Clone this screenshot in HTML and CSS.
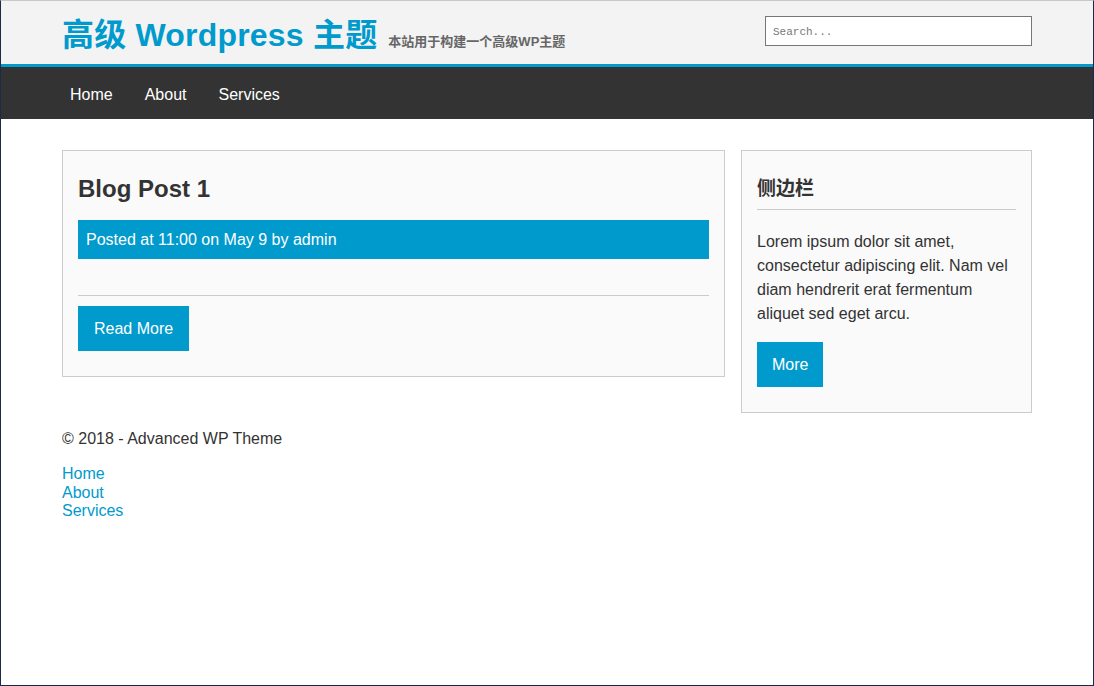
FILE: index.html
```html
<!DOCTYPE html>
<html lang="zh">
<head>
<meta charset="utf-8">
<title>高级 Wordpress 主题</title>
<link rel="stylesheet" href="styles.css">
</head>
<body>
<div class="frame">
  <header class="site-header">
    <div class="container header-inner">
      <div class="brand">
        <h1 class="site-title">高级 Wordpress 主题</h1>
        <span class="site-desc">本站用于构建一个高级WP主题</span>
      </div>
      <form class="search-form">
        <input class="search-input" type="text" placeholder="Search...">
      </form>
    </div>
  </header>
  <nav class="main-nav">
    <div class="container nav-inner">
      <a href="#">Home</a>
      <a href="#">About</a>
      <a href="#">Services</a>
    </div>
  </nav>
  <div class="container content">
    <main class="main">
      <article class="post">
        <h2 class="post-title">Blog Post 1</h2>
        <div class="meta">Posted at 11:00 on May 9 by admin</div>
        <div class="excerpt"></div>
        <hr class="rule">
        <a class="button" href="#">Read More</a>
      </article>
    </main>
    <aside class="sidebar">
      <h3 class="widget-title">侧边栏</h3>
      <p class="widget-text">Lorem ipsum dolor sit amet, consectetur adipiscing elit. Nam vel diam hendrerit erat fermentum aliquet sed eget arcu.</p>
      <a class="button" href="#">More</a>
    </aside>
  </div>
  <footer class="container footer">
    <p class="copy">&copy; 2018 - Advanced WP Theme</p>
    <div class="footer-links">
      <a href="#">Home</a>
      <a href="#">About</a>
      <a href="#">Services</a>
    </div>
  </footer>
</div>
</body>
</html>
```
FILE: styles.css
```css
* { box-sizing: border-box; }
html, body { margin: 0; padding: 0; }
body {
  font-family: "Liberation Sans", Arial, "Noto Sans CJK SC", sans-serif;
  font-size: 16px;
  color: #333;
  background: #fff;
}
.frame {
  height: 686px;
  border-top: 1px solid #c8c8c8;
  border-left: 1px solid #1b2a4a;
  border-right: 1px solid #1b2a4a;
  border-bottom: 1px solid #1b2a4a;
  overflow: hidden;
}
.container {
  width: 970px;
  margin-left: 61px;
}
.site-header {
  background: #f3f3f3;
  border-bottom: 3px solid #009acd;
  height: 66px;
}
.header-inner {
  display: flex;
  justify-content: space-between;
  align-items: flex-start;
}
.brand {
  display: flex;
  align-items: baseline;
  padding-top: 12px;
}
.site-title {
  margin: 0;
  font-family: "Liberation Sans", Arial, "Noto Sans CJK SC", sans-serif;
  font-size: 32px;
  font-weight: bold;
  color: #009acd;
  line-height: 44px;
  letter-spacing: 0.2px;
}
.site-desc {
  margin-left: 11px;
  font-size: 13px;
  font-weight: bold;
  color: #666;
}
.search-form { padding-top: 15px; }
.search-input {
  width: 267px;
  height: 30px;
  border: 1px solid #777;
  background: #fff;
  padding: 2px 7px 0;
  font-family: "Liberation Mono", "DejaVu Sans Mono", monospace;
  font-size: 11px;
  outline: none;
}
.search-input::placeholder { color: #777; }
.main-nav {
  background: #333;
  height: 52px;
}
.nav-inner {
  display: flex;
  align-items: center;
  gap: 32px;
  height: 52px;
  padding-left: 8px;
  padding-top: 4px;
}
.nav-inner a {
  color: #fff;
  text-decoration: none;
  font-size: 16px;
}
.content {
  display: flex;
  justify-content: space-between;
  align-items: flex-start;
  margin-top: 31px;
}
.main { width: 663px; }
.post, .sidebar {
  background: #fafafa;
  border: 1px solid #ccc;
  padding: 16px 15px 25px;
}
.post-title {
  margin: 8px 0 0;
  font-size: 24px;
  line-height: 28px;
  font-weight: bold;
  color: #333;
}
.meta {
  margin-top: 17px;
  background: #009acd;
  color: #fff;
  height: 39px;
  line-height: 39px;
  padding: 0 8px;
}
.excerpt { height: 36px; }
.rule {
  margin: 0;
  border: 0;
  border-top: 1px solid #ccc;
}
.button {
  display: inline-block;
  margin-top: 10px;
  background: #009acd;
  color: #fff;
  text-decoration: none;
  height: 45px;
  line-height: 45px;
  padding: 0 16px;
}
.sidebar {
  width: 291px;
  padding: 16px 15px 25px;
}
.widget-title {
  margin: 8px 0 0;
  font-family: "Noto Sans CJK SC", "Liberation Sans", sans-serif;
  font-size: 19px;
  font-weight: bold;
  line-height: 24px;
  padding-bottom: 10px;
  border-bottom: 1px solid #ccc;
  color: #333;
}
.widget-text {
  margin: 20px 0 0;
  line-height: 24px;
}
.sidebar .button { margin-top: 16px; padding: 0 15px; }
.footer { padding-top: 17px; }
.copy { margin: 0; line-height: 18px; }
.footer-links {
  display: flex;
  flex-direction: column;
  margin-top: 17px;
}
.footer-links a {
  color: #009acd;
  text-decoration: none;
  line-height: 18.5px;
}
```
